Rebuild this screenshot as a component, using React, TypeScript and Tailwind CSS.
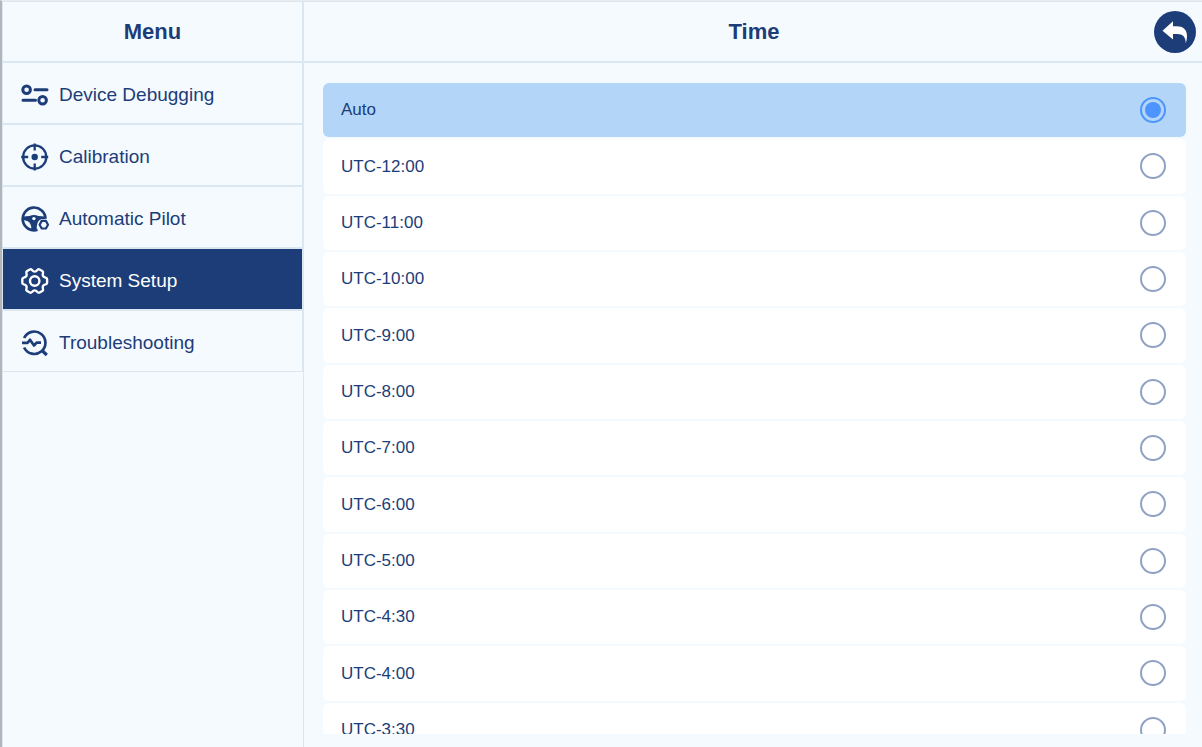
import React, { useState } from 'react';

const DebugIcon = () => (
  <svg width="28" height="28" viewBox="0 0 28 28" fill="none" stroke="currentColor" strokeWidth="3" aria-hidden="true">
    <circle cx="5.6" cy="8.8" r="3.8" />
    <circle cx="21.6" cy="19.2" r="3.8" />
    <path d="M14 8.800H26M2 19.200H14.500" strokeLinecap="round" />
  </svg>
);

const TargetIcon = () => (
  <svg width="28" height="28" viewBox="0 0 28 28" fill="none" stroke="currentColor" strokeWidth="2.3" aria-hidden="true">
    <circle cx="13.7" cy="14" r="11.6" />
    <circle cx="13.7" cy="14" r="3.2" fill="currentColor" stroke="none" />
    <path d="M13.700 0.500V7.500M13.700 20.500V27.500M0.200 14H7.200M20.200 14H27.200" />
  </svg>
);

const WheelIcon = () => (
  <svg width="28" height="28" viewBox="0 0 28 28" fill="none" stroke="currentColor" aria-hidden="true">
    <path d="M16.500 24.800A11.400 11.400 0 1 1 24.500 13.800" strokeWidth="2.700" />
    <path d="M2 11.600L8.500 11Q12.900 8.800 17.300 11L24.200 11.600V14.200L19 14.800Q15.600 16.500 15.600 25H10.400Q10.400 18 6.800 16.300L2 14.800Z" fill="currentColor" stroke="none" />
    <circle cx="12.900" cy="13.600" r="1.700" className="fill-[#f5faff]" stroke="none" />
    <path d="M20 14.300H25.600L28 19.400L25.600 25.500H20L17.200 19.700Z" className="fill-[#f5faff]" stroke="none" />
    <path d="M20.700 15.900H24.900L27 19.700L24.900 23.500H20.700L18.600 19.700Z" strokeWidth="2.200" strokeLinejoin="round" />
  </svg>
);

const GearIcon = () => (
  <svg width="28" height="28" viewBox="0 0 28 28" fill="none" stroke="currentColor" strokeWidth="2.4" strokeLinejoin="round" aria-hidden="true">
    <path d="M8.800 2.500Q10 2 11 3Q13.700 6.200 16.400 3Q17.400 2 18.600 2.500L21.300 4Q22.400 4.700 22 6Q20.800 10 24.700 10.600Q26.100 10.900 26.100 12.200V15.800Q26.100 17.100 24.700 17.400Q20.800 18 22 22Q22.400 23.300 21.300 24L18.600 25.500Q17.400 26 16.400 25Q13.700 21.800 11 25Q10 26 8.800 25.500L6.100 24Q5 23.300 5.400 22Q6.600 18 2.700 17.400Q1.300 17.100 1.300 15.800V12.200Q1.300 10.900 2.700 10.600Q6.600 10 5.400 6Q5 4.700 6.100 4Z" />
    <circle cx="13.700" cy="14" r="4.700" />
  </svg>
);

const DiagnoseIcon = () => (
  <svg width="28" height="28" viewBox="0 0 28 28" fill="none" stroke="currentColor" strokeWidth="2.700" aria-hidden="true">
    <path d="M3.100 9A11.200 11.200 0 1 1 3.100 18.500" />
    <path d="M20.500 21L25.800 26" strokeWidth="3.200" />
    <path d="M1 13.800H6.500L9 10.800L13 16.500L15.600 13.600H20" strokeLinejoin="round" />
  </svg>
);

const menuItems = [
  { id: 'debug', label: 'Device Debugging', icon: DebugIcon },
  { id: 'calibration', label: 'Calibration', icon: TargetIcon },
  { id: 'pilot', label: 'Automatic Pilot', icon: WheelIcon },
  { id: 'system', label: 'System Setup', icon: GearIcon },
  { id: 'trouble', label: 'Troubleshooting', icon: DiagnoseIcon },
];

const timeZones = [
  'Auto',
  'UTC-12:00',
  'UTC-11:00',
  'UTC-10:00',
  'UTC-9:00',
  'UTC-8:00',
  'UTC-7:00',
  'UTC-6:00',
  'UTC-5:00',
  'UTC-4:30',
  'UTC-4:00',
  'UTC-3:30',
];

const App: React.FC = () => {
  const [activeMenu, setActiveMenu] = useState('system');
  const [zone, setZone] = useState('Auto');

  return (
    <div className="flex h-screen border-t border-l-2 border-t-[#e9ecee] border-l-[#b4b5ba] bg-[#f5faff] font-['Liberation_Sans',Arial,sans-serif] text-[#1c3d78]">
      {/* Sidebar */}
      <aside className="w-[28%] max-w-[301px] shrink-0 border-t border-l border-[#dae6f0]">
        <h2 className="flex h-[61px] items-center justify-center border-r border-b-2 border-[#dae6f0] text-[22px] font-bold">Menu</h2>
        <nav>
          {menuItems.map(({ id, label, icon: Icon }) => (
            <button
              key={id}
              onClick={() => setActiveMenu(id)}
              className={`flex h-[62px] w-full items-center gap-2.5 border-r border-b-2 border-[#dae6f0] pt-1 pl-[18px] text-left text-[19px] last:h-[61px] last:border-b ${activeMenu === id ? 'bg-[#1c3d78] text-white' : ''}`}
            >
              <Icon />
              {label}
            </button>
          ))}
        </nav>
      </aside>

      {/* Time zone list */}
      <main className="flex min-w-0 flex-1 flex-col border-t border-l border-[#dae6f0]">
        <header className="flex h-[61px] shrink-0 items-center border-b-2 border-[#dae6f0] pr-1.5">
          <h1 className="flex-1 pl-[50px] text-center text-[22px] font-bold">Time</h1>
          <button aria-label="Back" className="flex size-[42px] items-center justify-center rounded-full bg-[#1c3d78] text-white">
            <svg width="42" height="42" viewBox="0 0 42 42" fill="currentColor" aria-hidden="true">
              <path d="M8.500 19.800L19 10.300V15.300H22.500C29 15.300 33 18.500 33 25C33 27.500 32.600 30 31.800 32.300C31.800 26 29 22.900 23 22.900H19V28.500Z" />
            </svg>
          </button>
        </header>

        <div className="mt-5 mr-4 mb-[13px] ml-[19px] min-h-0 flex-1 overflow-hidden">
          <div role="radiogroup" aria-label="Time" className="grid min-h-[674px] auto-rows-fr gap-0.5">
            {timeZones.map((tz) => (
              <label
                key={tz}
                className={`flex cursor-pointer items-center justify-between rounded-md pr-5 pl-[18px] text-[17px] ${zone === tz ? 'bg-[#b3d6f8]' : 'bg-white'}`}
              >
                {tz}
                <input
                  type="radio"
                  name="timezone"
                  value={tz}
                  checked={zone === tz}
                  onChange={() => setZone(tz)}
                  className="size-[26px] appearance-none rounded-full border-2 border-[#8fa2c4] bg-clip-content p-[3px] checked:border-[#4d94ff] checked:bg-[#4d94ff]"
                />
              </label>
            ))}
          </div>
        </div>
      </main>
    </div>
  );
};

export default App;
